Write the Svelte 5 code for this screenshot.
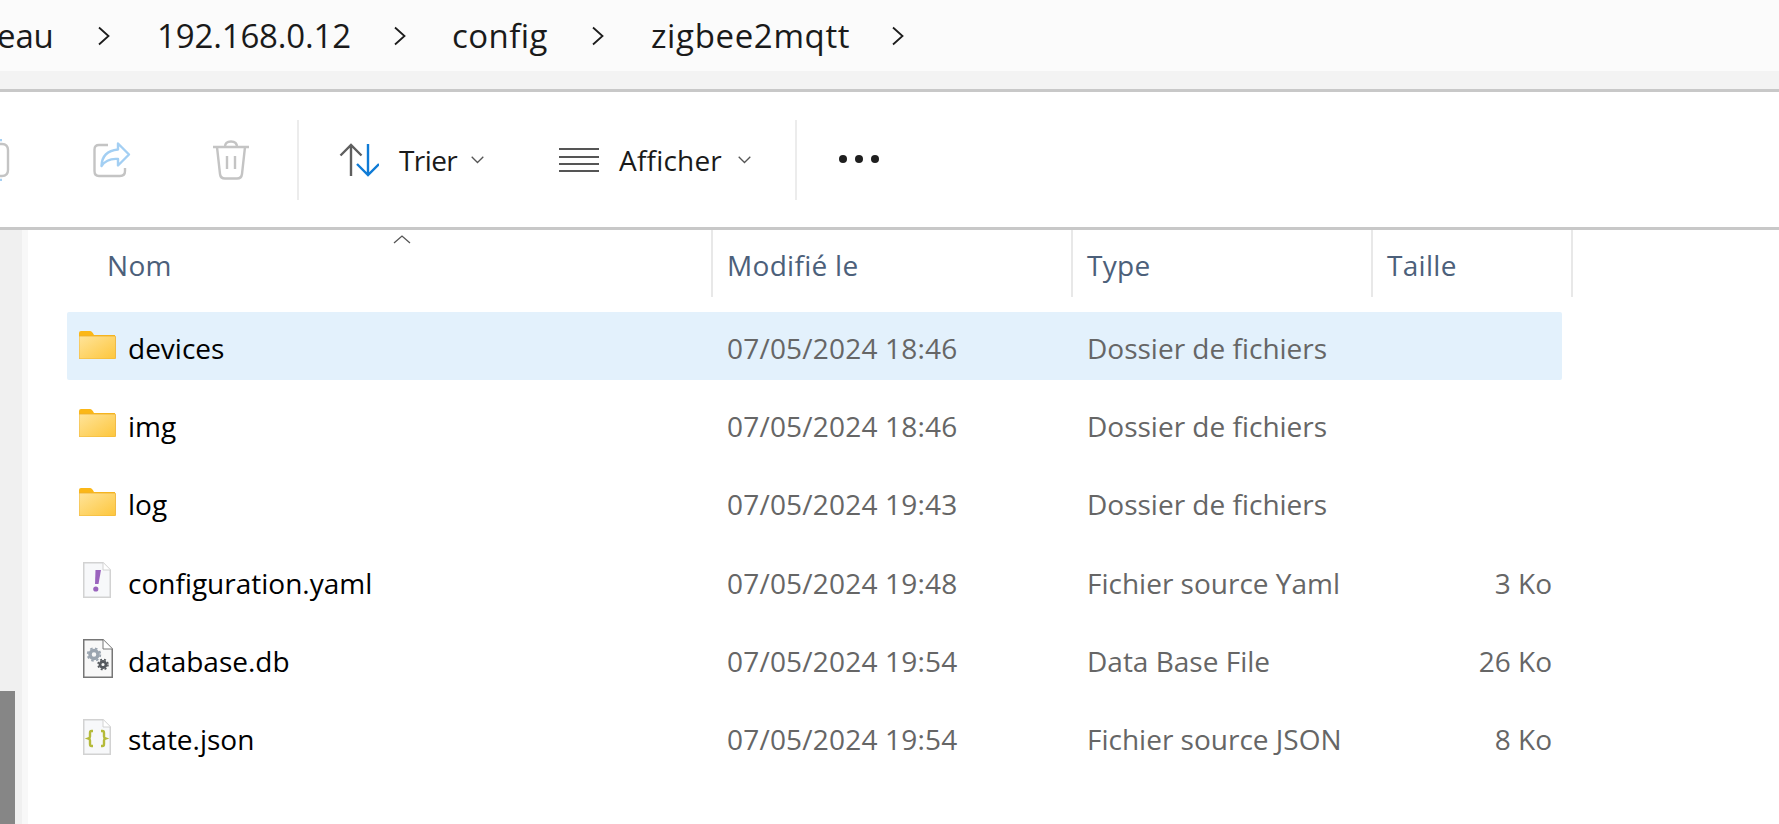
<script>
	let crumbs = ['eau', '192.168.0.12', 'config', 'zigbee2mqtt']

	let columns = [
		{ label: 'Nom', width: 644 },
		{ label: 'Modifié le', width: 360 },
		{ label: 'Type', width: 300 },
		{ label: 'Taille', width: 200 }
	]

	let files = [
		{ name: 'devices', icon: 'folder', date: '07/05/2024 18:46', type: 'Dossier de fichiers', size: '', selected: true },
		{ name: 'img', icon: 'folder', date: '07/05/2024 18:46', type: 'Dossier de fichiers', size: '' },
		{ name: 'log', icon: 'folder', date: '07/05/2024 19:43', type: 'Dossier de fichiers', size: '' },
		{ name: 'configuration.yaml', icon: 'yaml', date: '07/05/2024 19:48', type: 'Fichier source Yaml', size: '3 Ko' },
		{ name: 'database.db', icon: 'db', date: '07/05/2024 19:54', type: 'Data Base File', size: '26 Ko' },
		{ name: 'state.json', icon: 'json', date: '07/05/2024 19:54', type: 'Fichier source JSON', size: '8 Ko' }
	]
</script>

<svelte:head>
	<title>zigbee2mqtt</title>
</svelte:head>

<div class="window">
	<nav class="address">
		{#each crumbs as crumb}
			<span class="crumb">{crumb}</span>
			<svg class="sep" width="14" height="20" viewBox="0 0 14 20"><path d="M2 1.5 L11.5 10 L2 18.5" fill="none" stroke="#1c1c1c" stroke-width="1.800"/></svg>
		{/each}
	</nav>
	<div class="strip"></div>

	<div class="toolbar">
		<svg class="cut" width="12" height="42" viewBox="0 0 12 42">
			<path d="M0 5 H3 Q9 5 9 11 V31 Q9 37 3 37 H0" fill="none" stroke="#c4c4c4" stroke-width="2.4"/>
			<path d="M0 1 H3 M0 41 H3" stroke="#a6d0f3" stroke-width="2.4"/>
		</svg>
		<svg class="share" width="38" height="36" viewBox="0 0 38 36">
			<path d="M15 3 H6 Q1.5 3 1.5 7.5 V29 Q1.5 34 6 34 H27 Q32 34 32 29 V26" fill="none" stroke="#c4c4c4" stroke-width="2.4"/>
			<path d="M25 1.500 L36 12.500 L25 23.500 V17 Q14 16 8.500 24 Q9 9 25 7.500 Z" fill="none" stroke="#a3cff3" stroke-width="2.400" stroke-linejoin="round"/>
		</svg>
		<svg class="trash" width="38" height="40" viewBox="0 0 38 40">
			<path d="M1 7 H37" stroke="#c4c4c4" stroke-width="2.400"/>
			<path d="M13 7 Q13 1.500 19 1.500 Q25 1.500 25 7" fill="none" stroke="#c4c4c4" stroke-width="2.400"/>
			<path d="M5 7 L8 34 Q8.500 38.500 13 38.500 H25 Q29.500 38.500 30 34 L33 7" fill="none" stroke="#c4c4c4" stroke-width="2.400"/>
			<path d="M15 16 V29 M23 16 V29" stroke="#c4c4c4" stroke-width="2.400"/>
		</svg>
		<span class="divider first"></span>
		<svg class="sort" width="40" height="34" viewBox="0 0 40 34">
			<path d="M12 33 V2 M1.500 12.500 L12 2 L22.500 12.500" fill="none" stroke="#5f5f5f" stroke-width="2.400"/>
			<path d="M29 1 V32 M18 21 L29 32 L40 21" fill="none" stroke="#0f7bd6" stroke-width="2.400"/>
		</svg>
		<span class="tool trier">Trier</span>
		<svg class="caret" width="13" height="8" viewBox="0 0 13 8"><path d="M.7 .7 L6.500 6.500 L12.300 .7" fill="none" stroke="#555" stroke-width="1.300"/></svg>
		<svg class="lines" width="40" height="26" viewBox="0 0 40 26">
			<path d="M0 2 H40 M0 10 H40 M0 17 H40 M0 24 H40" stroke="#555" stroke-width="2.200"/>
		</svg>
		<span class="tool afficher">Afficher</span>
		<svg class="caret" width="13" height="8" viewBox="0 0 13 8"><path d="M.7 .7 L6.500 6.500 L12.300 .7" fill="none" stroke="#555" stroke-width="1.300"/></svg>
		<span class="divider second"></span>
		<span class="dots"><i></i><i></i><i></i></span>
	</div>

	<div class="body">
		<div class="rail"><span class="thumb"></span></div>
		<div class="rail-light"></div>
		<div class="content">
			<div class="head">
				{#each columns as col, i}
					<div class="col" style="width: {col.width}px">
						{col.label}
						{#if i == 0}
							<svg class="up" width="18" height="9" viewBox="0 0 18 9"><path d="M1 8 L9 1 L17 8" fill="none" stroke="#555" stroke-width="1.300"/></svg>
						{/if}
					</div>
				{/each}
			</div>

			<div class="rows">
				{#each files as f}
					<div class="row" class:selected={f.selected}>
						<div class="name">
							<span class="icon">
								{#if f.icon == 'folder'}
									<svg width="37" height="28" viewBox="0 0 37 28">
										<defs>
											<linearGradient id="fold" x1="0" y1="0" x2="1" y2="1">
												<stop offset="0" stop-color="#ffe49a"/>
												<stop offset="1" stop-color="#fdc63c"/>
											</linearGradient>
										</defs>
										<path d="M0 2 Q0 0 2 0 H11 Q13 0 15 4 H36 V7 H0 Z" fill="#fbb717"/>
										<path d="M0 5 H36 Q36.500 5 36.500 6 V27 Q36.500 28 35.500 28 H1 Q0 28 0 27 Z" fill="url(#fold)" stroke="#edb02f" stroke-width="0.800"/>
									</svg>
								{:else if f.icon == 'yaml'}
									<svg width="28" height="36" viewBox="0 0 28 36">
										<path d="M.75 .75 H20 L27.250 8 V35.250 H.75 Z" fill="#f7f8fa" stroke="#d2d2d2" stroke-width="1.500"/>
										<path d="M20 .75 V8 H27.250" fill="#fff" stroke="#d2d2d2" stroke-width="1"/>
										<path d="M12.500 8 H18 L15.500 22 H12 Z" fill="#9a63bd"/>
										<circle cx="12.800" cy="27" r="2.600" fill="#9a63bd"/>
									</svg>
								{:else if f.icon == 'db'}
									<svg width="30" height="39" viewBox="0 0 30 39">
										<path d="M.75 .75 H20 L29.250 10 V38.250 H.75 Z" fill="#f8f8f8" stroke="#767676" stroke-width="1.500"/>
										<path d="M20 .75 V10 H29.250" fill="#fff" stroke="#767676" stroke-width="1"/>
										<circle cx="11" cy="15.500" r="4" fill="none" stroke="#9aa4af" stroke-width="3.500"/>
										<circle cx="11" cy="15.500" r="6.300" fill="none" stroke="#9aa4af" stroke-width="1.800" stroke-dasharray="2.500 2.500"/>
										<circle cx="20" cy="25.500" r="3" fill="none" stroke="#55595e" stroke-width="2.800"/>
										<circle cx="20" cy="25.500" r="5" fill="none" stroke="#55595e" stroke-width="1.500" stroke-dasharray="2 2"/>
									</svg>
								{:else}
									<svg width="28" height="36" viewBox="0 0 28 36">
										<path d="M.75 .75 H20 L27.250 8 V35.250 H.75 Z" fill="#f7f8fa" stroke="#d2d2d2" stroke-width="1.500"/>
										<path d="M20 .75 V8 H27.250" fill="#fff" stroke="#d2d2d2" stroke-width="1"/>
										<path d="M10 12 H8.500 Q7 12 7 14 V17.500 Q7 19 5.500 19.500 Q7 20 7 21.500 V25 Q7 27 8.500 27 H10" fill="none" stroke="#b5ba3a" stroke-width="2.400"/>
										<path d="M18 12 H19.500 Q21 12 21 14 V17.500 Q21 19 22.500 19.500 Q21 20 21 21.500 V25 Q21 27 19.500 27 H18" fill="none" stroke="#b5ba3a" stroke-width="2.400"/>
									</svg>
								{/if}
							</span>
							<span class="label">{f.name}</span>
						</div>
						<div class="date">{f.date}</div>
						<div class="type">{f.type}</div>
						<div class="size">{f.size}</div>
					</div>
				{/each}
			</div>
		</div>
	</div>
</div>

<style>
	:global(body) {
		margin: 0;
		background: #fff;
		overflow: hidden;
	}

	.window {
		width: 1779px;
		height: 824px;
		overflow: hidden;
		display: flex;
		flex-direction: column;
		font-family: 'Open Sans', 'Noto Sans', sans-serif;
	}

	.address {
		height: 71px;
		background: #fbfbfb;
		display: flex;
		align-items: center;
		color: #1a1a1a;
		font-size: 33px;
		letter-spacing: -0.150px;
	}

	.crumb {
		white-space: nowrap;
	}

	.crumb:nth-of-type(1) {
		width: 100px;
		margin-left: -3px;
	}

	.crumb:nth-of-type(2) {
		width: 191px;
		margin-left: 46px;
	}

	.crumb:nth-of-type(3) {
		width: 94px;
		margin-left: 45px;
		letter-spacing: 0.450px;
	}

	.crumb:nth-of-type(4) {
		width: 195px;
		margin-left: 46px;
		letter-spacing: 0.650px;
	}

	.sep {
		flex: none;
	}

	.crumb + .sep {
		margin-left: 45px;
	}

	.crumb:nth-of-type(1) + .sep {
		margin-left: 0;
	}

	.strip {
		height: 18px;
		background: #f3f3f3;
		border-bottom: 3px solid #c8c8c8;
	}

	.toolbar {
		height: 135px;
		display: flex;
		align-items: center;
		border-bottom: 3px solid #c8c8c8;
	}

	.divider {
		width: 2px;
		height: 80px;
		background: #ececec;
	}

	.cut {
		margin-left: -1px;
	}

	.share {
		margin-left: 82px;
	}

	.trash {
		margin-left: 81px;
	}

	.divider.first {
		margin-left: 47px;
	}

	.sort {
		margin-left: 40px;
	}

	.tool {
		font-size: 28px;
		color: #1a1a1a;
		white-space: nowrap;
	}

	.trier {
		margin-left: 20px;
		width: 57px;
		letter-spacing: -0.600px;
	}

	.caret {
		margin-left: 15px;
	}

	.lines {
		margin-left: 75px;
	}

	.afficher {
		margin-left: 20px;
		width: 104px;
		letter-spacing: 0.200px;
	}

	.divider.second {
		margin-left: 44px;
	}

	.dots {
		display: flex;
		gap: 8px;
		margin-left: 42px;
		margin-top: -2px;
	}

	.dots i {
		width: 8px;
		height: 8px;
		border-radius: 50%;
		background: #1f1f1f;
	}

	.body {
		flex: 1;
		display: flex;
		min-height: 0;
	}

	.rail {
		width: 22px;
		background: #f0f0f0;
		display: flex;
		flex-direction: column;
		justify-content: flex-end;
	}

	.thumb {
		width: 15px;
		height: 133px;
		background: #868686;
	}

	.rail-light {
		width: 6px;
		background: #f8f8f8;
	}

	.content {
		flex: 1;
		font-size: 28px;
	}

	.head {
		display: flex;
		height: 67px;
	}

	.col {
		box-sizing: border-box;
		height: 67px;
		line-height: 70px;
		color: #4c607a;
		font-size: 28px;
		letter-spacing: 0.300px;
		padding-left: 14px;
		border-right: 2px solid #e8e8e8;
		position: relative;
	}

	.col:first-child {
		padding-left: 79px;
		width: 685px !important;
	}

	.up {
		position: absolute;
		left: 365px;
		top: 5px;
	}

	.rows {
		display: flex;
		flex-direction: column;
		gap: 10.400px;
		margin-top: 15px;
		margin-left: 39px;
		width: 1495px;
	}

	.row {
		height: 68px;
		display: grid;
		grid-template-columns: 660px 360px 301px 1fr;
		align-items: center;
		border-radius: 2px;
	}

	.row.selected {
		background: #e3f1fc;
	}

	.name {
		display: flex;
		align-items: center;
		color: #000;
	}

	.icon {
		width: 61px;
		padding-left: 12px;
		box-sizing: border-box;
		display: flex;
		flex: none;
		margin-top: -2px;
	}

	.row:nth-child(n+4) .icon {
		padding-left: 16px;
	}

	.label, .date, .type, .size {
		padding-top: 3px;
		line-height: 38px;
	}

	.date, .type, .size {
		color: #666;
	}

	.date {
		letter-spacing: 0.200px;
	}

	.size {
		text-align: right;
		padding-right: 10px;
	}
</style>
